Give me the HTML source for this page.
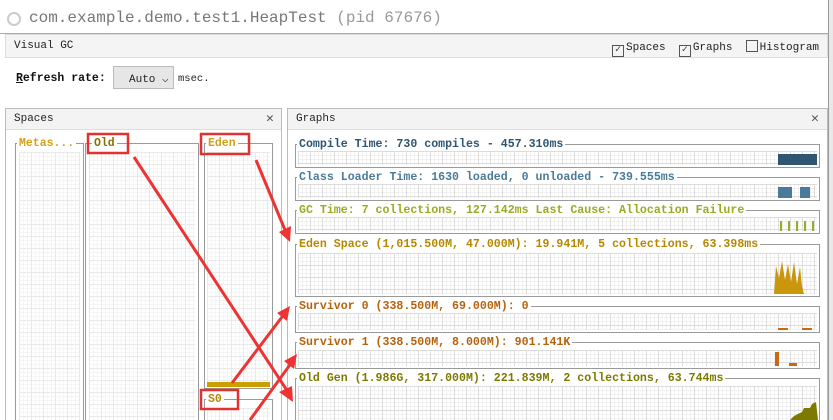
<!DOCTYPE html>
<html style="overflow:hidden;width:833px;height:420px"><head><meta charset="utf-8"><style>
*{margin:0;padding:0;box-sizing:border-box}
body{width:833px;height:420px;overflow:hidden;background:#fff;font-family:"Liberation Mono",monospace;position:relative}
.abs{position:absolute}
.grid{background-color:#fff;background-image:linear-gradient(#dcdcdc 1px,transparent 1px),linear-gradient(90deg,#dcdcdc 1px,transparent 1px),linear-gradient(#f0f0f0 1px,transparent 1px),linear-gradient(90deg,#f0f0f0 1px,transparent 1px);background-size:12px 12px,12px 12px,4px 4px,4px 4px}
.box{position:absolute;border:1px solid #9a9a9a}
.gt{position:absolute;background:#fff;font-size:11.6px;font-weight:bold;line-height:13px;padding:0 2px;white-space:pre}
.lab{position:absolute;background:#fff;font-size:11.5px;font-weight:bold;color:#d4a017;padding:0 2px;line-height:13px}
.cb{display:inline-block;width:12px;height:12px;border:1px solid #555;vertical-align:-2px;margin-right:2px;font-size:10px;line-height:10px;text-align:center;color:#333}
</style></head><body>
<div class="abs" style="left:0;top:0;width:833px;height:420px;overflow:hidden">
<div class="abs" style="left:7px;top:12px;width:14px;height:14px;border:2px solid #ccc;border-radius:50%"></div>
<div class="abs" style="left:29px;top:9px;font-size:16px;color:#777;white-space:pre">com.example.demo.test1.HeapTest <span style="color:#999">(pid 67676)</span></div>
<div class="abs" style="left:0;top:33px;width:833px;height:1px;background:#aaa"></div>
<div class="abs" style="left:828px;top:0;width:5px;height:420px;background:#e8e8e8;border-left:1px solid #999"></div>
<div class="abs" style="left:5px;top:34px;width:823px;height:24px;background:#f4f4f4;border:1px solid #ddd"></div>
<div class="abs" style="left:14px;top:40px;font-size:11px;color:#222">Visual GC</div>
<div class="abs" style="left:612px;top:40px;font-size:11px;color:#222;white-space:pre"><span class="cb">✓</span>Spaces  <span class="cb">✓</span>Graphs  <span class="cb"></span>Histogram</div>
<div class="abs" style="left:16px;top:72px;font-size:11.5px;font-weight:bold;color:#111"><u>R</u>efresh rate:</div>
<div class="abs" style="left:113px;top:66px;width:61px;height:23px;background:#e6e6e6;border:1px solid #bbb;font-size:11px;padding:5px 0 0 15px;color:#222">Auto ⌵</div>
<div class="abs" style="left:178px;top:73px;font-size:10.5px;color:#222">msec.</div>
<div class="abs" style="left:5px;top:108px;width:277px;height:320px;border:1px solid #bbb"></div>
<div class="abs" style="left:6px;top:109px;width:275px;height:21px;background:#f3f3f3;border-bottom:1px solid #ddd"></div>
<div class="abs" style="left:14px;top:113px;font-size:11px;color:#222">Spaces</div>
<div class="abs" style="left:266px;top:111px;font-size:13px;color:#555">✕</div>
<div class="abs" style="left:287px;top:108px;width:541px;height:320px;border:1px solid #bbb"></div>
<div class="abs" style="left:288px;top:109px;width:539px;height:21px;background:#f3f3f3;border-bottom:1px solid #ddd"></div>
<div class="abs" style="left:296px;top:113px;font-size:11px;color:#222">Graphs</div>
<div class="abs" style="left:811px;top:111px;font-size:13px;color:#555">✕</div>

<div class="box" style="left:15px;top:143px;width:69px;height:290px"></div>
<div class="abs grid" style="left:19px;top:152px;width:61px;height:270px;opacity:.6"></div>
<div class="lab" style="left:17px;top:137px">Metas...</div>
<div class="box" style="left:85px;top:143px;width:114px;height:290px"></div>
<div class="abs grid" style="left:89px;top:152px;width:106px;height:270px;opacity:.6"></div>
<div class="lab" style="left:92px;top:137px;color:#8a7000">Old</div>
<div class="box" style="left:204px;top:143px;width:69px;height:246px"></div>
<div class="abs grid" style="left:207px;top:152px;width:63px;height:230px;opacity:.6"></div>
<div class="abs" style="left:207px;top:382px;width:63px;height:5px;background:#c9a000"></div>
<div class="lab" style="left:206px;top:137px">Eden</div>
<div class="box" style="left:204px;top:399px;width:69px;height:30px"></div>
<div class="abs grid" style="left:207px;top:408px;width:63px;height:14px;opacity:.6"></div>
<div class="lab" style="left:206px;top:393px;color:#b58800">S0</div>

<div class="box" style="left:295px;top:144px;width:525px;height:24px"></div>
<div class="abs grid" style="left:298px;top:151px;width:519px;height:14px"></div>
<div class="abs" style="left:778px;top:154px;width:39px;height:11px;background:#2f5570"></div>
<div class="gt" style="left:297px;top:138px;color:#2f5570">Compile Time: 730 compiles - 457.310ms</div>

<div class="box" style="left:295px;top:177px;width:525px;height:24px"></div>
<div class="abs grid" style="left:298px;top:184px;width:519px;height:14px"></div>
<div class="abs" style="left:778px;top:187px;width:14px;height:11px;background:#4a7a9a"></div>
<div class="abs" style="left:800px;top:187px;width:10px;height:11px;background:#4a7a9a"></div>
<div class="gt" style="left:297px;top:171px;color:#4a7a9a">Class Loader Time: 1630 loaded, 0 unloaded - 739.555ms</div>

<div class="box" style="left:295px;top:210px;width:525px;height:24px"></div>
<div class="abs grid" style="left:298px;top:217px;width:519px;height:14px"></div>
<div class="abs" style="left:780px;top:221px;width:36px;height:10px;background:repeating-linear-gradient(90deg,#9aab20 0 2px,transparent 2px 8px)"></div>
<div class="gt" style="left:297px;top:204px;color:#9aab20">GC Time: 7 collections, 127.142ms Last Cause: Allocation Failure</div>

<div class="box" style="left:295px;top:244px;width:525px;height:53px"></div>
<div class="abs grid" style="left:298px;top:253px;width:519px;height:41px"></div>
<svg class="abs" style="left:774px;top:258px" width="44" height="36"><polygon points="0,36 2,8 5,20 8,3 11,22 14,6 17,24 20,4 23,26 26,9 28,28 30,36" fill="#c9960c"/></svg>
<div class="gt" style="left:297px;top:238px;color:#b58800">Eden Space (1,015.500M, 47.000M): 19.941M, 5 collections, 63.398ms</div>

<div class="box" style="left:295px;top:306px;width:525px;height:27px"></div>
<div class="abs grid" style="left:298px;top:313px;width:519px;height:17px"></div>
<div class="abs" style="left:778px;top:328px;width:36px;height:2px;background:repeating-linear-gradient(90deg,#c96a10 0 10px,transparent 10px 24px)"></div>
<div class="gt" style="left:297px;top:300px;color:#b5620e">Survivor 0 (338.500M, 69.000M): 0</div>

<div class="box" style="left:295px;top:342px;width:525px;height:27px"></div>
<div class="abs grid" style="left:298px;top:350px;width:519px;height:16px"></div>
<div class="abs" style="left:775px;top:352px;width:4px;height:14px;background:#c96a10"></div>
<div class="abs" style="left:789px;top:363px;width:8px;height:3px;background:#c96a10"></div>
<div class="gt" style="left:297px;top:336px;color:#b5620e">Survivor 1 (338.500M, 8.000M): 901.141K</div>

<div class="box" style="left:295px;top:378px;width:525px;height:60px"></div>
<div class="abs grid" style="left:298px;top:386px;width:519px;height:34px"></div>
<svg class="abs" style="left:790px;top:400px" width="28" height="20"><polygon points="0,20 4,16 8,14 12,12 14,8 20,8 22,4 26,2 28,20" fill="#7d7a00"/></svg>
<div class="gt" style="left:297px;top:372px;color:#7d7a00">Old Gen (1.986G, 317.000M): 221.839M, 2 collections, 63.744ms</div>

<svg class="abs" style="left:0;top:0" width="833" height="420">
<g fill="none" stroke="#e53030" stroke-width="2.5">
<rect x="88" y="134" width="40" height="19"/>
<rect x="201" y="134" width="48" height="20"/>
<rect x="201" y="390" width="37" height="19"/>
</g>
<g stroke="#ee3333" stroke-width="3">
<line x1="134" y1="157" x2="290" y2="395"/>
<line x1="256" y1="160" x2="285" y2="230"/>
<line x1="232" y1="383" x2="285" y2="313"/>
<line x1="250" y1="420" x2="292" y2="362"/>
</g>
<g fill="#ee3333">
<polygon points="293,402 279,392 292,386"/>
<polygon points="290,242 279,232 291,226"/>
<polygon points="290,306 287,321 277,313"/>
<polygon points="297,354 294,369 284,361"/>
</g>
</svg>
</div>
</body></html>
